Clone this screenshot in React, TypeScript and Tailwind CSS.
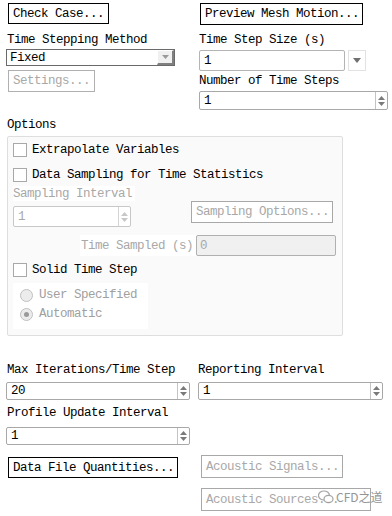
import React from "react";

function SpinArrows({ disabled }: { disabled?: boolean }) {
  const c = disabled ? "#c8c8c8" : "#7a7a7a";
  return (
    <div className={`flex h-full w-[12px] flex-col items-center justify-center gap-[2px] border-l ${disabled ? "border-[#d4d4d4]" : "border-[#c4c4c4]"}`}>
      <svg width="7" height="4" viewBox="0 0 7 4"><path d="M0 4 L3.5 0 L7 4 Z" fill={c} /></svg>
      <svg width="7" height="4" viewBox="0 0 7 4"><path d="M0 0 L3.5 4 L7 0 Z" fill={c} /></svg>
    </div>
  );
}

function Spin({ value, w, h, disabled }: { value: string; w: string; h: string; disabled?: boolean }) {
  return (
    <div className={`flex ${w} ${h} items-stretch rounded-[2px] border ${disabled ? "border-[#c8c8c8] text-[#a8a8a8]" : "border-[#a8a8a8] text-black"} bg-white`}>
      <div className="flex flex-1 items-center pl-[4px]">{value}</div>
      <SpinArrows disabled={disabled} />
    </div>
  );
}

function Check({ label }: { label: string }) {
  return (
    <div className="flex h-[14px] items-center">
      <div className="ml-[5px] h-[14px] w-[14px] border border-[#a8a8a8] bg-white" />
      <span className="ml-[5px] leading-[14px]">{label}</span>
    </div>
  );
}

function Radio({ label, checked }: { label: string; checked?: boolean }) {
  return (
    <div className="flex h-[14px] items-center">
      <div className="ml-[7px] flex h-[13px] w-[13px] items-center justify-center rounded-full border border-[#c0c0c0] bg-[#ececec]">
        {checked && <div className="h-[5px] w-[5px] rounded-full bg-[#9a9a9a]" />}
      </div>
      <span className="ml-[6px] leading-[14px] text-[#a0a0a0]">{label}</span>
    </div>
  );
}

export default function App() {
  return (
    <div className="relative h-[516px] w-[392px] overflow-hidden whitespace-nowrap bg-white font-['Liberation_Mono',monospace] text-[12.5px] leading-[14px] tracking-[-0.5px] text-black">
      <div className="grid grid-cols-[186px_190px] gap-x-[6px] pl-[6px]">
        {/* left column */}
        <div className="flex flex-col items-start">
          <div className="ml-[2px] mt-[3px] flex h-[21px] w-[101px] items-center border border-black bg-white pl-[4px]">Check Case...</div>
          <div className="ml-[1px] mt-[9px] h-[14px]">Time Stepping Method</div>
          <div className="mt-[2px] flex h-[17px] w-[169px] items-stretch border border-[#6a6a6a] bg-white">
            <div className="flex flex-1 items-center pl-[3px]">Fixed</div>
            <div className="flex w-[17px] items-center justify-center border-b-2 border-r-2 border-l border-t border-b-[#808080] border-l-white border-r-[#808080] border-t-white bg-[#f0f0f0]">
              <svg width="7" height="4" viewBox="0 0 7 4"><path d="M0 0 L3.5 4 L7 0 Z" fill="#9a9a9a" /></svg>
            </div>
          </div>
          <div className="ml-[2px] mt-[4px] flex h-[22px] w-[87px] items-center border border-[#b0b0b0] bg-white pl-[4px] text-[#a8a8a8]">Settings...</div>
        </div>
        {/* right column */}
        <div className="flex flex-col items-start">
          <div className="ml-[2px] mt-[3px] flex h-[22px] w-[163px] items-center border border-black bg-white pl-[4px]">Preview Mesh Motion...</div>
          <div className="ml-[1px] mt-[8px] h-[14px]">Time Step Size (s)</div>
          <div className="ml-[1px] mt-[3px] flex h-[21px] items-stretch">
            <div className="flex w-[146px] items-center rounded-[2px] border border-[#b4b4b4] bg-white pl-[4px]">1</div>
            <div className="ml-[3px] flex w-[18px] items-center justify-center border border-[#e2e2e2] bg-white">
              <svg width="8" height="5" viewBox="0 0 8 5"><path d="M0 0 L4 5 L8 0 Z" fill="#707070" /></svg>
            </div>
          </div>
          <div className="ml-[1px] mt-[3px] h-[14px]">Number of Time Steps</div>
          <div className="ml-[1px] mt-[3px]">
            <Spin value="1" w="w-[189px]" h="h-[19px]" />
          </div>
        </div>
      </div>

      <div className="ml-[7px] mt-[8px] h-[14px]">Options</div>
      <div className="ml-[7px] mt-[4px] flex h-[200px] w-[336px] flex-col rounded-[2px] border border-[#dedede] bg-[#fafafa]">
        <div className="mt-[6px]"><Check label="Extrapolate Variables" /></div>
        <div className="mt-[11px]"><Check label="Data Sampling for Time Statistics" /></div>
        <div className="ml-[5px] mt-[4px] flex h-[15px] w-[122px] items-center bg-white text-[#a8a8a8]">Sampling Interval</div>
        <div className="flex h-[27px] items-start">
          <div className="ml-[5px] mt-[5px]">
            <Spin value="1" w="w-[118px]" h="h-[21px]" disabled />
          </div>
          <div className="ml-[60px] flex h-[22px] w-[142px] items-center border border-[#a8a8a8] bg-white pl-[4px] text-[#a8a8a8]">Sampling Options...</div>
        </div>
        <div className="mt-[7px] flex h-[21px] items-stretch">
          <div className="ml-[72px] flex w-[116px] items-center justify-end bg-white pr-[3px] text-[#a8a8a8]">Time Sampled (s)</div>
          <div className="flex w-[140px] items-center rounded-[2px] border border-[#b0b0b0] bg-[#f0f0f0] pl-[3px] text-[#a8a8a8]">0</div>
        </div>
        <div className="mt-[7px]"><Check label="Solid Time Step" /></div>
        <div className="ml-[5px] mt-[6px] flex h-[46px] w-[135px] flex-col bg-white pt-[5px]">
          <Radio label="User Specified" />
          <div className="mt-[5px]"><Radio label="Automatic" checked /></div>
        </div>
      </div>

      <div className="mt-[27px] grid grid-cols-[186px_190px] gap-x-[6px] pl-[6px]">
        <div className="flex flex-col items-start">
          <div className="ml-[1px] h-[14px]">Max Iterations/Time Step</div>
          <div className="mt-[5px]"><Spin value="20" w="w-[184px]" h="h-[18px]" /></div>
          <div className="ml-[1px] mt-[6px] h-[14px]">Profile Update Interval</div>
          <div className="mt-[7px]"><Spin value="1" w="w-[184px]" h="h-[18px]" /></div>
          <div className="ml-[2px] mt-[12px] flex h-[21px] w-[170px] items-center border border-black bg-white pl-[4px]">Data File Quantities...</div>
        </div>
        <div className="flex flex-col items-start">
          <div className="h-[14px]">Reporting Interval</div>
          <div className="mt-[5px]"><Spin value="1" w="w-[185px]" h="h-[18px]" /></div>
          <div className="ml-[3px] mt-[55px] flex h-[23px] w-[142px] items-center border border-[#a8a8a8] bg-white pl-[4px] text-[#a8a8a8]">Acoustic Signals...</div>
          <div className="ml-[3px] mt-[10px] flex h-[23px] w-[170px] items-center border border-[#a8a8a8] bg-white pl-[4px] text-[#a8a8a8]">Acoustic Sources...</div>
        </div>
      </div>

      <div className="absolute left-[318px] top-[490px] flex items-center gap-[2px] font-['Noto_Sans_CJK_SC',sans-serif] text-[12px] tracking-normal text-[#8a8a8a] opacity-90">
        <svg width="16" height="14" viewBox="0 0 16 14">
          <ellipse cx="6" cy="5.5" rx="5.5" ry="4.5" fill="none" stroke="#9a9a9a" strokeWidth="1.2" />
          <ellipse cx="10.5" cy="9" rx="4.5" ry="3.6" fill="#fff" stroke="#9a9a9a" strokeWidth="1.2" />
        </svg>
        <span>CFD之道</span>
      </div>
    </div>
  );
}
